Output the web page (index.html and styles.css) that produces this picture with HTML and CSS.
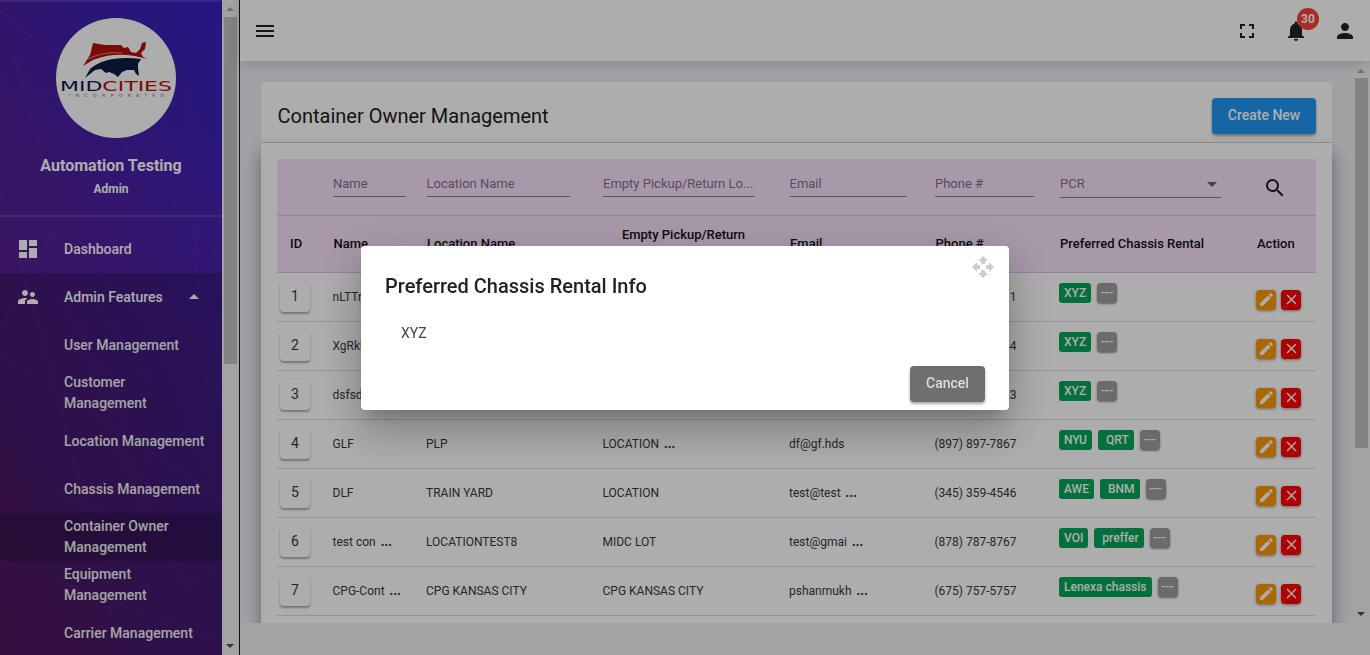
FILE: index.html
```html
<!DOCTYPE html>
<html lang="en">
<head>
<meta charset="utf-8">
<title>Container Owner Management</title>
<link rel="stylesheet" href="styles.css">
</head>
<body>
<svg class="sprite" aria-hidden="true">
  <symbol id="edit" viewBox="0 0 24 24"><path d="M3 17.25V21h3.75L17.81 9.94l-3.75-3.75L3 17.25zM20.71 7.04a1 1 0 0 0 0-1.41l-2.34-2.34a1 1 0 0 0-1.41 0l-1.83 1.83 3.75 3.75 1.83-1.83z"/></symbol>
  <symbol id="close" viewBox="0 0 24 24"><path d="M19 6.41L17.59 5 12 10.59 6.41 5 5 6.41 10.59 12 5 17.59 6.41 19 12 13.41 17.59 19 19 17.59 13.41 12z"/></symbol>
</svg>
<div class="app">
  <aside class="sidebar">
    <svg class="web" viewBox="0 0 222 655"><path d="M192 0V210L212 440M0 10L70 70L130 150L222 260M0 190L40 330L90 520L120 655M0 355L120 430L222 500M0 470L222 560M30 215L110 285L222 395M15 60L60 220L0 330M222 570L100 610L0 590M0 560L220 640"/></svg>
    <div class="profile">
      <svg class="logo" viewBox="0 0 120 120">
        <circle cx="60" cy="60" r="60" fill="#fff"/>
        <path fill="#b80f0a" d="M37 25L49 27L65 27L68 30L72 29L75 34L80 35L84 31L86 25L90 24L89 31L85 35L87 39L91 41Q62 32 37 42L27 48L34 37Z"/>
        <path fill="none" stroke="#fff" stroke-width=".5" d="M32 41Q48 33 66 35"/>
        <path fill="#0a1b44" d="M29 60L34 51Q50 37 85 41L82 46L82 50L83 58L80 56L78 52L71 52L66 54L62 59L58 56L53 54L50 55L45 51L39 52Z"/>
        <text class="logo-word" x="4" y="73" textLength="112" lengthAdjust="spacingAndGlyphs"><tspan fill="#0a1b44">MID</tspan><tspan fill="#b80f0a">CITIES</tspan></text>
        <text class="logo-sub" x="13" y="79" textLength="95">INCORPORATED</text>
      </svg>
      <div class="user">Automation Testing</div>
      <div class="role">Admin</div>
    </div>
    <nav class="nav">
      <a class="item"><svg viewBox="0 0 24 24"><path d="M3 13h8V3H3v10zm0 8h8v-6H3v6zm10 0h8V11h-8v10zm0-18v6h8V3h-8z"/></svg><span>Dashboard</span></a>
      <div class="group">
        <a class="item"><svg viewBox="0 0 24 24"><path d="M16.5 12c1.38 0 2.49-1.12 2.49-2.5S17.88 7 16.5 7 14 8.12 14 9.5s1.12 2.5 2.5 2.5zM9 11c1.66 0 2.99-1.34 2.99-3S10.660 5 9 5 6 6.340 6 8s1.340 3 3 3zm7.500 3c-1.830 0-5.500.92-5.500 2.750V19h11v-2.250c0-1.830-3.670-2.750-5.500-2.750zM9 13c-2.330 0-7 1.170-7 3.500V19h7v-2.250c0-.85.33-2.340 2.370-3.470C10.500 13.100 9.660 13 9 13z"/></svg><span>Admin Features</span><i class="caret"></i></a>
        <a class="item sub"><span>User Management</span></a>
        <a class="item sub"><span>Customer<br>Management</span></a>
        <a class="item sub"><span>Location Management</span></a>
        <a class="item sub"><span>Chassis Management</span></a>
        <a class="item sub active"><span>Container Owner<br>Management</span></a>
        <a class="item sub"><span>Equipment<br>Management</span></a>
        <a class="item sub"><span>Carrier Management</span></a>
      </div>
    </nav>
  </aside>
  <div class="scroll side-scroll"><i class="up"></i><b></b><i class="down"></i></div>
  <div class="main">
    <header class="topbar">
      <svg class="menu" viewBox="0 0 24 24"><path d="M3 18h18v-2H3v2zm0-5h18v-2H3v2zm0-7v2h18V6H3z"/></svg>
      <div class="tools">
        <svg viewBox="0 0 24 24"><path d="M5 5h5v2H7v3H5V5zm9 0h5v5h-2V7h-3V5zm3 9h2v5h-5v-2h3v-3zm-7 3v2H5v-5h2v3h3z"/></svg>
        <div class="bell"><svg viewBox="0 0 24 24"><path d="M12 22c1.100 0 2-.9 2-2h-4c0 1.100.9 2 2 2zm6-6v-5c0-3.070-1.630-5.640-4.500-6.320V4c0-.83-.67-1.500-1.500-1.500s-1.500.67-1.500 1.500v.68C7.640 5.360 6 7.920 6 11v5l-2 2v1h16v-1l-2-2z"/></svg><span class="count">30</span></div>
        <svg viewBox="0 0 24 24"><path d="M12 12c2.210 0 4-1.790 4-4s-1.790-4-4-4-4 1.790-4 4 1.790 4 4 4zm0 2c-2.670 0-8 1.340-8 4v2h16v-2c0-2.660-5.330-4-8-4z"/></svg>
      </div>
    </header>
    <div class="view">
      <section class="page">
        <div class="card-head"><h1>Container Owner Management</h1><button class="create">Create New</button></div>
        <div class="card-body">
          <div class="table">
            <div class="row filters">
              <span></span>
              <span class="field f-name">Name</span>
              <span class="field f-loc">Location Name</span>
              <span class="field f-empty">Empty Pickup/Return Lo...</span>
              <span class="field f-mail">Email</span>
              <span class="field f-phone">Phone #</span>
              <span class="field f-pcr">PCR<i class="caret-down"></i></span>
              <svg class="search" viewBox="0 0 24 24"><path d="M15.500 14h-.79l-.28-.27A6.470 6.470 0 0 0 16 9.500 6.500 6.500 0 1 0 9.500 16c1.610 0 3.090-.59 4.230-1.570l.27.28v.79l5 4.990L20.490 19l-4.990-5zm-6 0C7.010 14 5 11.990 5 9.500S7.010 5 9.500 5 14 7.010 14 9.500 11.990 14 9.500 14z"/></svg>
            </div>
            <div class="row heads">
              <span class="h-id">ID</span><span>Name</span><span>Location Name</span><span class="h-empty">Empty Pickup/Return</span><span>Email</span><span>Phone #</span><span>Preferred Chassis Rental</span><span class="h-act">Action</span>
            </div>
            <div class="row data"><button class="num">1</button><span>nLTTr</span><span></span><span></span><span></span><span class="phone">(345) 359-4511</span><span class="tags"><em>XYZ</em><button>---</button></span><span class="acts"><button class="e"><svg><use href="#edit"/></svg></button><button class="d"><svg><use href="#close"/></svg></button></span></div>
            <div class="row data"><button class="num">2</button><span>XgRkb</span><span></span><span></span><span></span><span class="phone">(345) 359-4544</span><span class="tags"><em>XYZ</em><button>---</button></span><span class="acts"><button class="e"><svg><use href="#edit"/></svg></button><button class="d"><svg><use href="#close"/></svg></button></span></div>
            <div class="row data"><button class="num">3</button><span>dsfsd</span><span></span><span></span><span></span><span class="phone">(345) 359-4523</span><span class="tags"><em>XYZ</em><button>---</button></span><span class="acts"><button class="e"><svg><use href="#edit"/></svg></button><button class="d"><svg><use href="#close"/></svg></button></span></div>
            <div class="row data"><button class="num">4</button><span>GLF</span><span>PLP</span><span>LOCATION <b>...</b></span><span>df@gf.hds</span><span class="phone">(897) 897-7867</span><span class="tags"><em>NYU</em><em class="next">QRT</em><button>---</button></span><span class="acts"><button class="e"><svg><use href="#edit"/></svg></button><button class="d"><svg><use href="#close"/></svg></button></span></div>
            <div class="row data"><button class="num">5</button><span>DLF</span><span>TRAIN YARD</span><span>LOCATION</span><span>test@test <b>...</b></span><span class="phone">(345) 359-4546</span><span class="tags"><em>AWE</em><em class="next">BNM</em><button>---</button></span><span class="acts"><button class="e"><svg><use href="#edit"/></svg></button><button class="d"><svg><use href="#close"/></svg></button></span></div>
            <div class="row data"><button class="num">6</button><span>test con <b>...</b></span><span>LOCATIONTEST8</span><span>MIDC LOT</span><span>test@gmai <b>...</b></span><span class="phone">(878) 787-8767</span><span class="tags"><em>VOI</em><em class="next">preffer</em><button>---</button></span><span class="acts"><button class="e"><svg><use href="#edit"/></svg></button><button class="d"><svg><use href="#close"/></svg></button></span></div>
            <div class="row data"><button class="num">7</button><span>CPG-Cont <b>...</b></span><span>CPG KANSAS CITY</span><span>CPG KANSAS CITY</span><span>pshanmukh <b>...</b></span><span class="phone">(675) 757-5757</span><span class="tags"><em>Lenexa chassis</em><button>---</button></span><span class="acts"><button class="e"><svg><use href="#edit"/></svg></button><button class="d"><svg><use href="#close"/></svg></button></span></div>
          </div>
        </div>
      </section>
      <div class="scroll page-scroll"><i class="up"></i><b></b><i class="down"></i></div>
    </div>
  </div>
</div>
<div class="backdrop">
  <div class="dialog" role="dialog">
    <svg class="drag" viewBox="0 0 24 24"><path d="M10 9h4V6h3l-5-5-5 5h3v3zm-1 1H6V7l-5 5 5 5v-3h3v-4zm14 2l-5-5v3h-3v4h3v3l5-5zm-9 3h-4v3H7l5 5 5-5h-3v-3z"/></svg>
    <h2>Preferred Chassis Rental Info</h2>
    <p>XYZ</p>
    <button class="cancel">Cancel</button>
  </div>
</div>
</body>
</html>
```
FILE: styles.css
```css
* { box-sizing: border-box; }
body { margin: 0; height: 655px; overflow: hidden; font-family: Roboto, "Liberation Sans", sans-serif; font-size: 14px; color: #222; }
button { border: 0; padding: 0; font: inherit; color: inherit; }
.sprite { position: absolute; width: 0; height: 0; }
.app { display: flex; height: 655px; }

.sidebar { position: relative; flex: none; width: 222px; height: 655px; overflow: hidden; color: #fff;
  background: linear-gradient(70deg, rgba(106, 28, 102, .72), rgba(92, 30, 130, .5) 50%, rgba(80, 30, 150, .1) 90%), linear-gradient(180deg, #3420be, #4824b2 50%, #4c249c); }
.web { position: absolute; inset: 0; width: 222px; height: 655px; fill: none; stroke: rgba(210, 80, 160, .06); stroke-width: 2; }
.profile { position: relative; height: 217px; padding-top: 16px; border-top: 2px solid rgba(255, 255, 255, .13); border-bottom: 2px solid rgba(255, 255, 255, .13); text-align: center; }
.logo { display: block; width: 120px; height: 120px; margin-left: 56px; }
.logo-word { font: 13.500px "DejaVu Sans", sans-serif; }
.logo-sub { font: 4.500px "DejaVu Sans", sans-serif; fill: #666; }
.user { margin-top: 16px; font-size: 16px; font-weight: 700; line-height: 24px; }
.role { font-size: 12px; font-weight: 700; line-height: 22px; }
.nav { position: relative; padding-top: 8px; }
.group { background: rgba(0, 0, 0, .2); }
.item { display: flex; align-items: center; height: 48px; padding-left: 16px; font-weight: 500; line-height: 21px; }
.item svg { width: 24px; height: 24px; margin-right: 24px; fill: #fff; }
.item.sub { padding-left: 64px; color: #f2f2f2; white-space: nowrap; }
.item.active { background: rgba(0, 0, 0, .2); }
.caret { margin: 0 0 2px 26px; border: 5px solid transparent; border-top: 0; border-bottom-color: #fff; }

.scroll { display: flex; flex-direction: column; align-items: center; flex: none; background: #f1f1f1; }
.scroll b { background: #c1c1c1; }
.up { border: 4px solid transparent; border-top: 0; border-bottom-color: #a3a3a3; }
.down { margin-top: auto; border: 4px solid transparent; border-bottom: 0; border-top-color: #505050; }
.side-scroll { width: 18px; height: 655px; padding: 7px 1px 7px 0; border-right: 1px solid #16181c; }
.side-scroll b { width: 13px; height: 347px; margin-top: 6px; }
.page-scroll { width: 17px; height: 562px; padding: 8px 1px 7px 0; }
.page-scroll b { width: 13px; height: 370px; margin-top: 5px; }

.main { flex: 1; display: flex; flex-direction: column; min-width: 0; background: #f1f2f5; }
.topbar { position: relative; z-index: 1; display: flex; align-items: center; justify-content: space-between; flex: none; height: 61px; padding: 0 13px; background: #fff; box-shadow: 0 2px 12px rgba(0, 0, 0, .16); }
.topbar svg { display: block; width: 24px; height: 24px; fill: #222; }
.tools { display: flex; gap: 25px; }
.bell { position: relative; }
.count { position: absolute; left: 13px; top: -11px; width: 22px; height: 22px; border-radius: 50%; background: #f44336; color: #fff; font-size: 12px; font-weight: 700; line-height: 22px; text-align: center; }
.view { display: flex; justify-content: space-between; height: 562px; overflow: hidden; background: #ebeef5; }
.page { flex: 1; padding: 21px 21px 0 21px; }
.card-head { display: flex; align-items: center; justify-content: space-between; height: 61px; padding: 7px 16px 0 16.500px; border-bottom: 1px solid #d6d6d6; border-radius: 3px 3px 0 0; background: #fff; box-shadow: 0 0 18px rgba(0, 0, 0, .03); }
h1 { margin: 0; font-size: 20px; font-weight: 400; color: #1c1c1c; }
.create { width: 104px; height: 36px; border-radius: 4px; background: #2196f3; color: #fff; font-weight: 500; line-height: 34px; padding-bottom: 2px; box-shadow: 0 2px 3px rgba(0, 0, 0, .35); }
.card-body { height: 530px; padding: 16px; background: #fff; box-shadow: 0 10px 16px rgba(30, 34, 50, .45); }

.row { display: grid; grid-template-columns: 55.500px 93.500px 176.500px 186.500px 145.500px 124.500px 196px 1fr; border-bottom: 1px solid #dcdcdc; white-space: nowrap; }
.filters { height: 57px; padding-top: 14px; background: #f7e2fb; border-color: #dcc4e0; font-size: 13px; color: #866f89; }
.field { height: 24px; margin-left: .5px; line-height: 22px; border-bottom: 1px solid #8d778f; }
.f-name { width: 73px; }
.f-loc { width: 143px; }
.f-empty { width: 152px; }
.f-mail { width: 117px; }
.f-phone { width: 99px; }
.f-pcr { display: flex; justify-content: space-between; width: 161px; height: 25px; margin-left: 1px; }
.caret-down { width: 10px; height: 5px; margin: 9px 4px 0 0; border: 5px solid transparent; border-bottom: 0; border-top-color: #6b5b6d; }
.search { width: 24px; height: 24px; margin: 3px 0 0 8px; fill: #1b1b1b; }
.heads { height: 57px; align-items: center; padding-bottom: 2px; background: #f7e2fb; border-color: #dcc4e0; color: #111; font-size: 13px; font-weight: 500; line-height: 19px; }
.heads span { padding-left: 1px; }
.heads .h-id { padding-left: 13px; }
.heads .h-empty { width: 161px; padding-bottom: 17px; text-align: center; }
.heads .h-act { padding-left: 2px; }
.data { height: 49px; align-items: center; font-size: 12px; color: #383838; }
.data b { margin-left: 2px; font-weight: 900; letter-spacing: .2px; }
.phone { letter-spacing: 0; }
.num { width: 30px; height: 30px; margin: -1px 0 0 3px; border-radius: 4px; background: #fff; font-size: 14px; line-height: 29px; padding-bottom: 1px; box-shadow: 0 2px 2px rgba(0, 0, 0, .3), 0 0 2px rgba(0, 0, 0, .1); }
.tags { display: flex; gap: 6px; margin-top: -9px; }
.tags em { height: 20px; padding: 0 5px; border-radius: 3px; background: #00a65a; color: #fff; font-style: normal; font-weight: 500; line-height: 20px; }
.tags .next { padding-left: 8px; }
.tags button { width: 20px; height: 20px; border-radius: 4px; background: #9e9e9e; color: #fff; font-weight: 500; box-shadow: 0 1px 2px rgba(0, 0, 0, .45); }
.acts { display: flex; gap: 5px; margin: 5px 0 0 1px; }
.acts button { display: flex; align-items: center; justify-content: center; width: 20px; height: 20px; border-radius: 4px; box-shadow: 0 1px 3px rgba(0, 0, 0, .4); }
.acts .e { background: #ff9800; }
.acts .d { background: #f00; }
.acts svg { width: 17px; height: 17px; fill: #fff; }

.backdrop { position: fixed; inset: 0; z-index: 5; display: flex; align-items: center; justify-content: center; background: rgba(0, 0, 0, .32); }
.dialog { position: relative; display: flex; flex-direction: column; width: 648px; height: 164px; padding: 24px; border-radius: 4px; background: #fff;
  box-shadow: 0 11px 15px -7px rgba(0, 0, 0, .2), 0 24px 38px 3px rgba(0, 0, 0, .14), 0 9px 46px 8px rgba(0, 0, 0, .12); }
.drag { position: absolute; top: 9px; right: 14px; width: 24px; height: 24px; fill: #ccc; }
h2 { margin: 0; font-size: 20px; font-weight: 500; line-height: 32px; color: #222; }
.dialog p { margin: 20px 16px 0; font-size: 14px; line-height: 22px; color: #444; }
.cancel { align-self: flex-end; flex: none; width: 75px; height: 36px; margin-top: 22px; padding-bottom: 2px; border-radius: 4px; background: #6f6f6f; color: #ddd; font-weight: 500; line-height: 34px; box-shadow: 0 2px 3px rgba(0, 0, 0, .35); }
```
